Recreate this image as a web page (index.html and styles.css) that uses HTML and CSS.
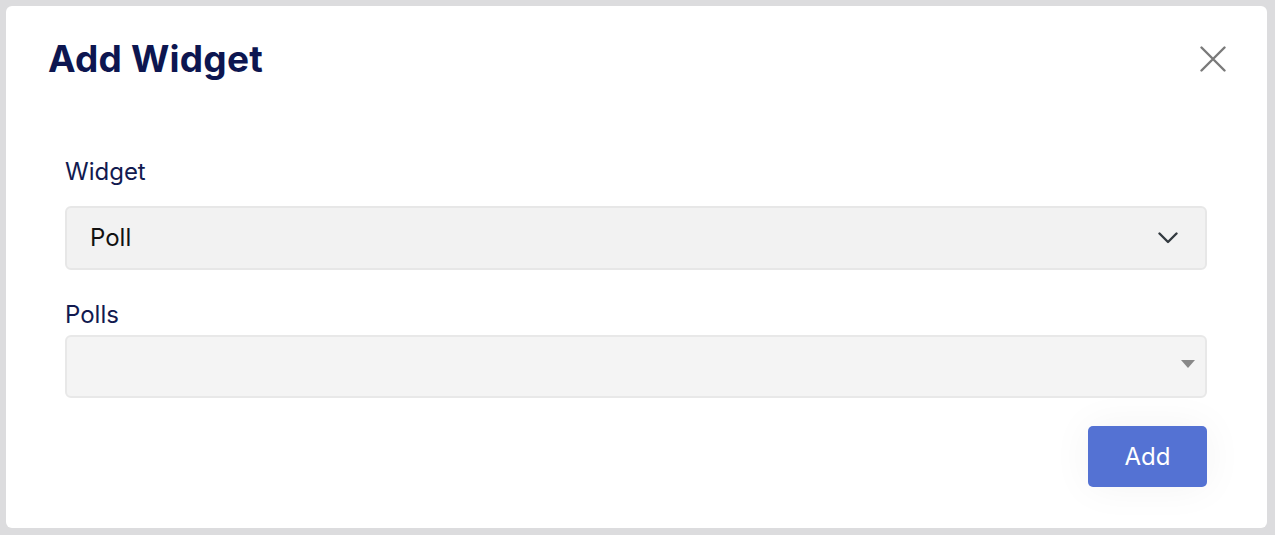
FILE: index.html
```html
<!DOCTYPE html>
<html lang="en">
<head>
<meta charset="utf-8">
<title>Add Widget</title>
<link rel="stylesheet" href="styles.css">
</head>
<body>
<div class="overlay">
  <div class="modal">
    <div class="modal-header">
      <h2 class="modal-title">Add Widget</h2>
      <button class="close-btn" aria-label="Close">
        <svg width="26" height="26" viewBox="0 0 26 26"><path d="M1.5 1.5 L24.5 24.5 M24.5 1.5 L1.5 24.5" stroke="#7a7a7a" stroke-width="2.4" fill="none" stroke-linecap="round"/></svg>
      </button>
    </div>
    <div class="modal-body">
      <div class="field">
        <label class="field-label">Widget</label>
        <div class="select select-primary">
          <span class="select-value">Poll</span>
          <svg class="chevron" width="20" height="12" viewBox="0 0 20 12"><path d="M1.5 1.5 L10 10 L18.5 1.5" stroke="#333a40" stroke-width="2.4" fill="none" stroke-linecap="round" stroke-linejoin="round"/></svg>
        </div>
      </div>
      <div class="field field-second">
        <label class="field-label">Polls</label>
        <div class="select select-secondary">
          <span class="select-value"></span>
          <span class="caret"></span>
        </div>
      </div>
      <div class="actions">
        <button class="add-btn">Add</button>
      </div>
    </div>
  </div>
</div>
</body>
</html>
```

FILE: styles.css
```css
html, body {
  margin: 0;
  padding: 0;
}
body {
  background: #dcdcde;
  font-family: Inter, "Open Sans", sans-serif;
  width: 1275px;
  height: 535px;
  overflow: hidden;
}
.overlay {
  padding: 6px 8px 7px 6px;
}
.modal {
  background: #ffffff;
  border-radius: 6px;
  height: 522px;
  box-sizing: border-box;
  padding: 30px 0 0 0;
}
.modal-header {
  display: flex;
  align-items: center;
  justify-content: space-between;
  padding: 0 41px 0 42px;
}
.modal-title {
  margin: 0;
  font-size: 37px;
  line-height: 45px;
  font-weight: 700;
  color: #0d1650;
  letter-spacing: 0.2px;
}
.close-btn {
  border: 0;
  background: transparent;
  padding: 0;
  width: 26px;
  height: 26px;
  display: flex;
}
.modal-body {
  padding: 76px 60px 0 59px;
}
.field-label {
  display: block;
  font-size: 24px;
  line-height: 30px;
  font-weight: 400;
  color: #121a50;
  margin-bottom: 19px;
}
.field-second {
  margin-top: 30px;
}
.field-second .field-label {
  margin-bottom: 5px;
}
.select {
  box-sizing: border-box;
  border-radius: 6px;
  display: flex;
  align-items: center;
  justify-content: space-between;
}
.select-primary {
  height: 64px;
  background: #f2f2f2;
  border: 2px solid #e7e7e7;
  padding: 0 27px 0 23px;
}
.select-secondary {
  height: 63px;
  background: #f4f4f4;
  border: 2px solid #e8e8e8;
  padding: 0 10px 0 23px;
}
.select-value {
  font-size: 24px;
  line-height: 30px;
  color: #111111;
}
.chevron {
  display: block;
}
.caret {
  width: 0;
  height: 0;
  border-left: 7px solid transparent;
  border-right: 7px solid transparent;
  border-top: 8px solid #888888;
  margin-top: -6px;
}
.actions {
  display: flex;
  justify-content: flex-end;
  margin-top: 28px;
}
.add-btn {
  width: 119px;
  height: 61px;
  border: 0;
  border-radius: 5px;
  background: #5472d3;
  color: #ffffff;
  font-family: Inter, "Open Sans", sans-serif;
  font-size: 24px;
  font-weight: 400;
  box-shadow: 0 0 40px rgba(0, 0, 0, 0.05);
}
```
